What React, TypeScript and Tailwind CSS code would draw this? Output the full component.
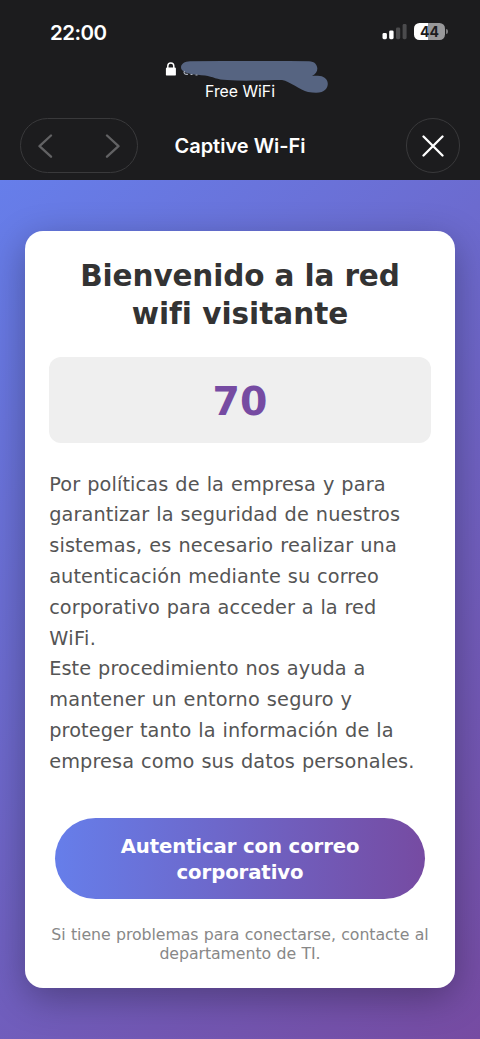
const intro = [
  { text: "Por políticas de la empresa y para", style: "tracking-[0.13px]" },
  { text: "garantizar la seguridad de nuestros", style: "tracking-[0.13px]" },
  { text: "sistemas, es necesario realizar una", style: "tracking-[0.16px]" },
  { text: "autenticación mediante su correo", style: "tracking-[0.1px]" },
  { text: "corporativo para acceder a la red", style: "tracking-[0.05px]" },
  { text: "WiFi.", style: "tracking-[0.4px]" },
  { text: "Este procedimiento nos ayuda a", style: "tracking-[0.1px]" },
  { text: "mantener un entorno seguro y", style: "tracking-[0.18px]" },
  { text: "proteger tanto la información de la", style: "tracking-[0.11px]" },
  { text: "empresa como sus datos personales.", style: "tracking-[0.12px]" },
];

function StatusBar() {
  return (
    <div className="flex h-[60px] items-start justify-between pl-[50px] pr-[32px] pt-[20px]">
      <span className="text-[20.5px] font-semibold leading-[25px] tracking-[-0.5px]">22:00</span>
      <div className="flex items-center gap-[7px] pt-[3px]">
        <svg className="h-[17px] w-[25px]" viewBox="0 0 25 17">
          <rect x="0.5" y="10" width="4.4" height="6.2" rx="1.4" fill="#fff" />
          <rect x="7.2" y="7.4" width="4.4" height="8.8" rx="1.4" fill="#fff" />
          <rect x="14" y="4.4" width="4.2" height="11.8" rx="1.4" fill="#4b4b4d" />
          <rect x="20.6" y="1" width="4" height="15.2" rx="1.4" fill="#4b4b4d" />
        </svg>
        <div className="flex items-center gap-px">
          <div className="flex h-[17px] w-[31px] items-center justify-center rounded-[5.5px] bg-linear-to-r from-white from-44% to-[#98989a] to-44% text-[14px] font-bold leading-none text-[#1c1c1e]">
            44
          </div>
          <div className="h-[5px] w-[2px] rounded-r-full bg-[#7a7a7c]" />
        </div>
      </div>
    </div>
  );
}

function AddressBar() {
  return (
    <div className="relative h-[58px]">
      <svg className="absolute left-[160px] top-0 h-[36px] w-[180px]" viewBox="160 60 180 36">
        <path d="M167.8 68v-2c0-4.1 6-4.1 6 0v2" fill="none" stroke="#fff" strokeWidth="1.5" />
        <rect x="165.9" y="67.600" width="10" height="8" rx="1.2" fill="#fff" />
        <path
          d="M190 61.2C183 61.200 179 66 182 70C185 74 195 74.500 205 75.500C213 76.500 217 80 227 80C247 81.500 265 80 282 80C290 81.500 300 90 308 92C316 93 322 93.500 326 89C330 83 327 77 320 76C317 75.500 315 75.500 312 76C320 73 319 61.200 309 61.200C268 61 230 61.200 190 61.200Z"
          fill="#566481"
        />
        <path d="M184.500 71c-1.600 2.500 1 3.800 3.500 3.200M190.500 74.500h2M195.500 75h2" fill="none" stroke="#aeb5c2" strokeWidth="1.100" />
      </svg>
      <p className="pt-[21.5px] text-center text-[15.800px] leading-[20px]">Free WiFi</p>
    </div>
  );
}

function NavBar() {
  return (
    <div className="grid h-[62px] grid-cols-[1fr_auto_1fr] items-start px-[20px]">
      <div className="flex h-[55px] w-[118px] items-center justify-between rounded-full border border-[#39393b] px-[17px]">
        <svg className="h-[24px] w-[15px]" viewBox="0 0 15 24">
          <path d="M13 1.500L1.500 12.200l11.500 10.500" fill="none" stroke="#626264" strokeWidth="2.300" strokeLinecap="round" strokeLinejoin="round" />
        </svg>
        <svg className="h-[24px] w-[15px]" viewBox="0 0 15 24">
          <path d="M2 1.500l11.500 10.700L2 22.700" fill="none" stroke="#626264" strokeWidth="2.300" strokeLinecap="round" strokeLinejoin="round" />
        </svg>
      </div>
      <h1 className="pt-[15px] text-[20px] font-semibold leading-[26px]">Captive Wi-Fi</h1>
      <div className="flex h-[55px] w-[54px] items-center justify-center justify-self-end rounded-full border border-[#39393b]">
        <svg className="h-[22px] w-[22px]" viewBox="0 0 22 22">
          <path d="M1.500 1.500l19 19M20.500 1.500l-19 19" stroke="#fff" strokeWidth="2.300" strokeLinecap="round" />
        </svg>
      </div>
    </div>
  );
}

export default function App() {
  return (
    <div className="flex h-[1039px] w-[480px] flex-col overflow-hidden">
      <header className="h-[180px] shrink-0 bg-[#1c1c1e] font-['Inter',sans-serif] text-white">
        <StatusBar />
        <AddressBar />
        <NavBar />
      </header>
      <main className="flex-1 bg-[linear-gradient(135deg,#667eea_0%,#764ba2_100%)] px-[24.6px] pt-[51px] font-['DejaVu_Sans',sans-serif]">
        <section className="h-[757px] rounded-[18px] bg-white px-[24.6px] pt-[26px] shadow-[0_10px_37px_rgba(0,0,0,0.3)]">
          <h2 className="whitespace-nowrap text-center text-[29.5px] font-bold leading-[38.300px] text-[#333] [font-variant-ligatures:none]">
            <span className="block tracking-[-0.12px]">Bienvenido a la red</span>
            <span className="block">wifi visitante</span>
          </h2>
          <div className="mt-[23px] flex h-[86px] items-center justify-center rounded-[12px] bg-[#efefef] pt-[3px] text-[39.400px] font-bold text-[#764ba2]">
            70
          </div>
          <p className="mt-[27px] whitespace-nowrap text-[19.300px] leading-[30.800px] text-[#555] [word-spacing:0.65px]">
            {intro.map((line) => (
              <span key={line.text} className={`block ${line.style}`}>
                {line.text}
              </span>
            ))}
          </p>
          <button className="mx-auto mt-[40.5px] flex h-[81px] w-[370px] flex-col items-center justify-center whitespace-nowrap rounded-full bg-linear-to-r/srgb from-[#667eea] to-[#764ba2] pt-[3px] text-[19.700px] font-bold leading-[26px] text-white">
            <span className="tracking-[-0.12px]">Autenticar con correo</span>
            <span className="tracking-[-0.1px]">corporativo</span>
          </button>
          <p className="mt-[25.5px] whitespace-nowrap text-center text-[15.750px] leading-[19.500px] tracking-[-0.07px] text-[#888] [word-spacing:0.5px]">
            <span className="block">Si tiene problemas para conectarse, contacte al</span>
            <span className="block">departamento de TI.</span>
          </p>
        </section>
      </main>
    </div>
  );
}
